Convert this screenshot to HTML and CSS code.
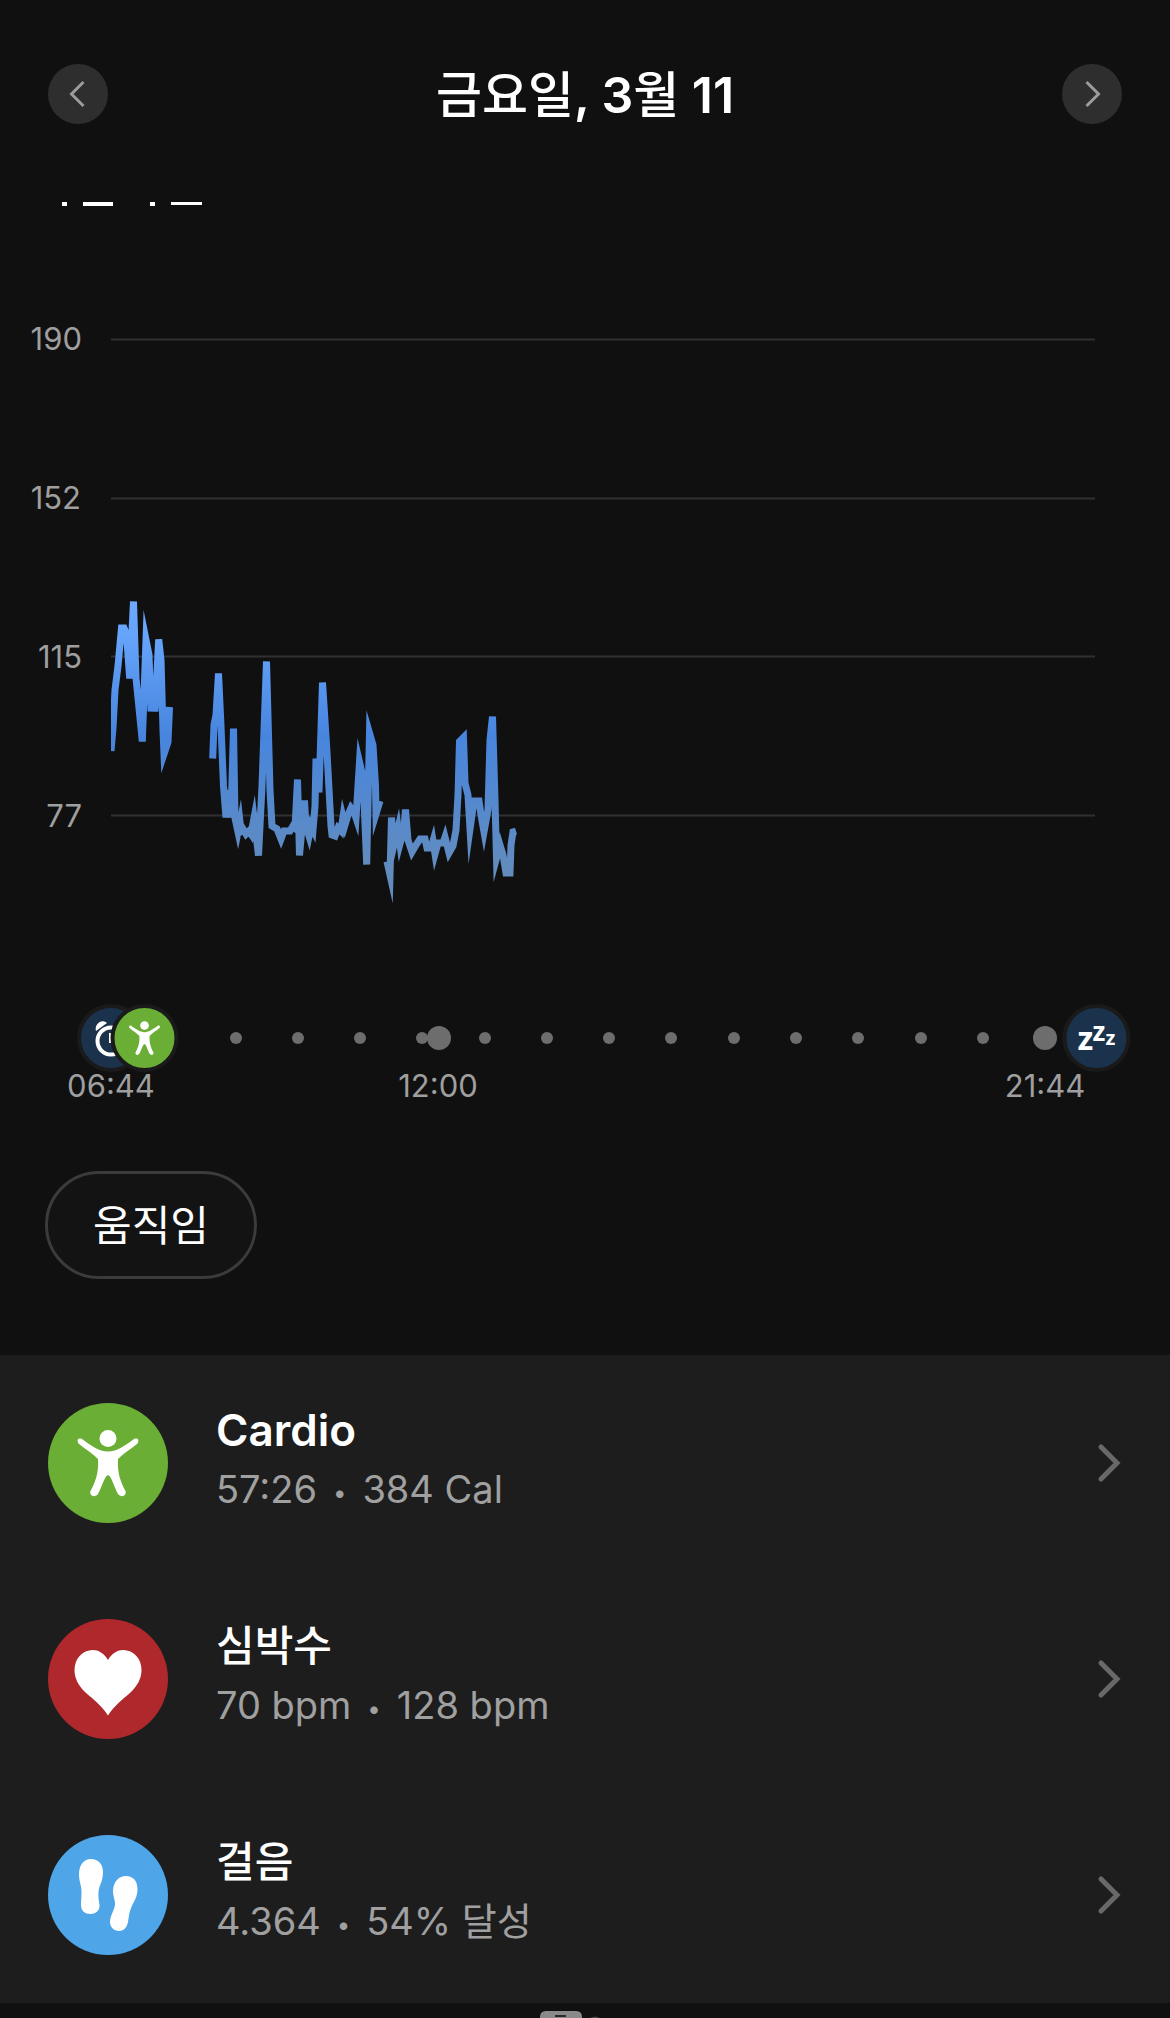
FILE: index.html
```
<!DOCTYPE html>
<html lang="ko">
<head>
    <meta charset="UTF-8">
    <meta name="viewport" content="width=device-width, initial-scale=1.0">
    <title>금요일, 3월 11</title>
    <link rel="stylesheet" href="styles.css">
</head>
<body>
    <header class="day-header">
        <button type="button" class="day-button" aria-label="이전 날">
            <svg width="60" height="60" viewBox="0 0 60 60"><path d="M35.500 18 L23.500 30 L35.500 42"/></svg>
        </button>
        <h1><span class="hangul">금요일</span>, 3<span class="hangul">월</span> 11</h1>
        <button type="button" class="day-button" aria-label="다음 날">
            <svg width="60" height="60" viewBox="0 0 60 60"><path d="M24.500 18 L36.500 30 L24.500 42"/></svg>
        </button>
    </header>

    <main>
        <!-- Lower edge of the heading scrolled under the header -->
        <svg class="scrolled-heading" width="180" height="4" viewBox="0 0 180 4" aria-hidden="true">
            <path d="M14 0h5v4h-5z M35 0h30v4h-30z M102 0h5v4h-5z M123 0h31v3h-31z"/>
        </svg>

        <section class="chart" aria-label="심박수">
            <svg viewBox="0 320 1170 600">
                <defs>
                    <linearGradient id="rate" gradientUnits="userSpaceOnUse" x1="0" y1="600" x2="0" y2="870">
                        <stop offset="0" stop-color="#6ca9ff"/>
                        <stop offset="0.150" stop-color="#65a2fa"/>
                        <stop offset="0.500" stop-color="#4785de"/>
                        <stop offset="1" stop-color="#628cbe"/>
                    </linearGradient>
                    <clipPath id="plot"><rect x="111" y="320" width="984" height="600"/></clipPath>
                </defs>
                <g class="grid">
                    <path d="M111 339.500H1095 M111 498.500H1095 M111 656.500H1095 M111 815.500H1095"/>
                </g>
                <g class="axis axis-y">
                    <text x="82" y="350">190</text>
                    <text x="81" y="509">152</text>
                    <text x="82" y="668">115</text>
                    <text x="82" y="827">77</text>
                </g>
                <g class="rate" clip-path="url(#plot)">
                    <polyline points="111,751 113,728 115,690 118,666 121.500,628 124,628 126.500,634 129.700,678.500 133.500,601.500 136,678 138,698 142.300,741.500 146,640 149,655 151,711.500 153,678 155,711.500 158.700,639.500 161,660 163,730 164,754 168,742 169.500,707"/>
                    <polyline points="212.700,758.500 214,725 216,715 218.500,673.500 221,726 223.500,786 226,817.500 227.500,790 231,817.500 233.500,728.500 235,818 238,832 240,822 241,831 243,829 246,834 249,831 251,834 254,818 258.500,855.500 262,786 266.500,661.500 270,790 272,826 277,829 281,839 284,831 290,831 293,826 295,828 297.500,779.500 299.500,855.500 304.500,800.500 306,826 309,836 311,826 313,830 315,806 316,758.500 319,792.500 322.500,682.500 327,752 331,826 332,835 335,836 338,828 341,831 343,817 345,825 348,815 351,808 354,812 356,818 359.500,762 363,777 366.700,864.500 369.500,733 373,745 375.500,786 376,814 380,801"/>
                    <polyline points="387,861.500 390,875 391.500,817.500 394,845 398,828 400,844 403.800,830 405.500,809.500 408,840 412,852 416,845 420,839 425,839 427,848 431,848 433,841 435,854 438,843 443,843 445,837 449,853 453,846 456,830 458,795 459.500,741.500 463.500,737.500 465,783 468,795 470,829 474,801 479,801 481,815 484,832 488,810 490,740 492.500,716.500 495,800 496.500,858 500,845 503,855 506,873 510,873 511,845 513,832 516,831"/>
                </g>
            </svg>
        </section>

        <section class="timeline" aria-label="하루">
            <svg viewBox="0 1000 1170 110">
                <defs>
                    <g id="person">
                        <circle cx="60" cy="35.500" r="8.500"/>
                        <path d="M34 36 C42 42 51 48.500 60 48.500 C69 48.500 78 42 86 36 C90 34.500 91.500 37 89.500 40.500 C83 46 76 50 70 56 C69 70 73 80 77.500 88 C79 93 73 95 70 91 C66 84 64 74 60 72 C56 74 54 84 50 91 C47 95 41 93 42.500 88 C47 80 51 70 50 56 C44 50 37 46 30.500 40.500 C28.500 37 30 34.500 34 36Z"/>
                    </g>
                </defs>
                <g class="ticks">
                    <circle cx="236" cy="1038" r="6"/>
                    <circle cx="298" cy="1038" r="6"/>
                    <circle cx="360" cy="1038" r="6"/>
                    <circle cx="422" cy="1038" r="6"/>
                    <circle cx="485" cy="1038" r="6"/>
                    <circle cx="547" cy="1038" r="6"/>
                    <circle cx="609" cy="1038" r="6"/>
                    <circle cx="671" cy="1038" r="6"/>
                    <circle cx="734" cy="1038" r="6"/>
                    <circle cx="796" cy="1038" r="6"/>
                    <circle cx="858" cy="1038" r="6"/>
                    <circle cx="921" cy="1038" r="6"/>
                    <circle cx="983" cy="1038" r="6"/>
                    <circle cx="439" cy="1038" r="12"/>
                    <circle cx="1045" cy="1038" r="12"/>
                </g>
                <!-- Wake up -->
                <g transform="translate(111 1038)">
                    <circle class="event wake" r="32"/>
                    <circle class="clock" cy="3" r="13.500"/>
                    <path class="clock-hand" d="M-1 -5 V4 H6"/>
                    <path class="glyph" d="M-15 -7 C-17 -14 -9 -20 -4 -15Z M15 -7 C17 -14 9 -20 4 -15Z"/>
                </g>
                <!-- Activity -->
                <g transform="translate(144.500 1038)">
                    <circle class="event activity" r="32"/>
                    <use class="glyph" href="#person" transform="scale(0.510) translate(-60 -60)"/>
                </g>
                <!-- Sleep -->
                <g transform="translate(1096.500 1038)">
                    <circle class="event sleep" r="32"/>
                    <g class="zzz">
                        <text x="-19" y="12" font-size="32">z</text>
                        <text x="-4" y="3" font-size="26">z</text>
                        <text x="9" y="7" font-size="20">z</text>
                    </g>
                </g>
                <g class="axis axis-x">
                    <text x="111" y="1097">06:44</text>
                    <text x="438" y="1097">12:00</text>
                    <text x="1045" y="1097">21:44</text>
                </g>
            </svg>
        </section>

        <div class="filters">
            <button type="button" class="filter">움직임</button>
        </div>

        <nav class="cards">
            <a href="#cardio" class="card">
                <svg class="badge green" width="120" height="120" viewBox="0 0 120 120"><use href="#person"/></svg>
                <span class="card-text">
                    <strong>Cardio</strong>
                    <span>57:26 <span class="dot">•</span> 384 Cal</span>
                </span>
                <svg class="chevron" width="26" height="40" viewBox="0 0 26 40"><path d="M5 4 L21 20 L5 36"/></svg>
            </a>
            <a href="#heart-rate" class="card">
                <svg class="badge red" width="120" height="120" viewBox="0 0 120 120">
                    <path d="M60 41 C56 34 50 31 45 31 C34 31 26.500 40 26.500 51 C26.500 60 31 67 37 73 C45 80 54 87 60 96.500 C66 87 75 80 83 73 C89 67 93.500 60 93.500 51 C93.500 40 86 31 75 31 C70 31 64 34 60 41Z"/>
                </svg>
                <span class="card-text">
                    <strong class="hangul">심박수</strong>
                    <span>70 bpm <span class="dot">•</span> 128 bpm</span>
                </span>
                <svg class="chevron" width="26" height="40" viewBox="0 0 26 40"><path d="M5 4 L21 20 L5 36"/></svg>
            </a>
            <a href="#steps" class="card">
                <svg class="badge blue" width="120" height="120" viewBox="0 0 120 120">
                    <path d="M43 24 C35 24 31 31 31 39 C31 47 33.500 50 33.500 57 C33.500 62 33 66 33 70 C33 76 37 79 42.500 79 C48 79 52 75 51.500 70 C51 66 50 62 50.500 57 C51 50 55 47 55 37 C55 29 50 24 43 24Z"/>
                    <path d="M78 41 C71 41 66 46 65 55 C65 63 67.500 65 67 70 C66 76 62 81 62 87 C62 92 66 96 71 96 C76 96 79 92 80 87 C81 81 81 78 83.500 72 C86 66 89.500 62 89.500 54 C89.500 46 85 41 78 41Z"/>
                </svg>
                <span class="card-text">
                    <strong class="hangul">걸음</strong>
                    <span>4.364 <span class="dot">•</span> 54% 달성</span>
                </span>
                <svg class="chevron" width="26" height="40" viewBox="0 0 26 40"><path d="M5 4 L21 20 L5 36"/></svg>
            </a>
        </nav>
    </main>

    <footer class="footer">
        <svg width="64" height="7" viewBox="0 0 64 7" aria-hidden="true">
            <path d="M0 7 V6 Q0 0 6 0 H36 Q42 0 42 6 V7Z"/>
            <path class="footer-mark" d="M15 4h11v2h-11z"/>
            <path class="footer-dot" d="M50 7 Q55 4 60 7Z"/>
        </svg>
    </footer>
</body>
</html>
```
FILE: styles.css
```
* {
    box-sizing: border-box;
}
body {
    margin: 0;
    min-height: 100vh;
    background-color: #101010;
    color: #fff;
    font-family: Inter, "Noto Sans CJK KR", sans-serif;
}
svg {
    display: block;
}
.day-header {
    display: flex;
    align-items: center;
    justify-content: space-between;
    height: 202px;
    padding: 0 48px 14px;
}
h1 {
    margin: 0;
    padding-top: 2px;
    font-size: 50px;
    font-weight: 600;
    line-height: 60px;
}
h1 .hangul {
    font-weight: 500;
}
.day-button {
    width: 60px;
    height: 60px;
    padding: 0;
    border: none;
    border-radius: 50%;
    background-color: #2e2e2e;
    cursor: pointer;
}
.day-button path {
    fill: none;
    stroke: #9c9c9c;
    stroke-width: 3;
}
.scrolled-heading {
    margin-left: 48px;
    fill: #fff;
}
.chart {
    padding-top: 114px;
}
.chart svg,
.timeline svg {
    width: 100%;
    height: auto;
}
.grid path {
    stroke: #303030;
    stroke-width: 2;
}
.axis {
    fill: #9f9f9f;
    font-size: 31px;
}
.axis-y {
    text-anchor: end;
}
.axis-x {
    text-anchor: middle;
}
.rate {
    fill: none;
    stroke: url(#rate);
    stroke-width: 7;
    stroke-miterlimit: 10;
}
.timeline {
    padding-top: 80px;
}
.ticks {
    fill: #6d6d6d;
}
.event {
    stroke: #1a1a1a;
    stroke-width: 4;
}
.wake,
.sleep {
    fill: #1b324c;
}
.activity {
    fill: #6aae36;
}
.clock,
.clock-hand {
    fill: none;
    stroke: #fff;
    stroke-width: 4;
}
.clock-hand {
    stroke-width: 2;
}
.glyph {
    fill: #fff;
}
.zzz {
    fill: #fff;
    font-family: "Noto Sans", sans-serif;
    font-weight: 700;
}
.filters {
    padding: 61px 45px 76px;
}
.filter {
    height: 108px;
    padding: 0 45px 6px;
    border: 3px solid #3b3b3b;
    border-radius: 54px;
    background-color: #131313;
    color: #fff;
    font-family: inherit;
    font-size: 42px;
    cursor: pointer;
}
.cards {
    background-color: #1d1d1d;
}
.card {
    display: flex;
    align-items: center;
    height: 216px;
    padding: 0 48px;
    color: #fff;
    text-decoration: none;
}
.badge {
    flex: none;
    border-radius: 50%;
    fill: #fff;
}
.green {
    background-color: #6aae36;
}
.red {
    background-color: #ae282c;
}
.blue {
    background-color: #4ea6e8;
}
.card-text {
    display: flex;
    flex: 1;
    flex-direction: column;
    gap: 5px;
    margin-left: 48px;
    padding-bottom: 7px;
    color: #a0a0a0;
    font-size: 38px;
    line-height: 54px;
}
.card-text strong {
    color: #fff;
    font-size: 44px;
    font-weight: 600;
}
.card-text .hangul {
    font-size: 42px;
    font-weight: 500;
}
.dot {
    display: inline-block;
    width: 24px;
    font-size: 24px;
    line-height: 24px;
    text-align: center;
    vertical-align: 2px;
}
.chevron path {
    fill: none;
    stroke: #696969;
    stroke-width: 5;
    stroke-linecap: round;
}
.footer {
    height: 15px;
    padding: 8px 0 0 540px;
    overflow: hidden;
    background-color: #101010;
    fill: #8a8a8a;
}
.footer-mark {
    fill: #2a2a2a;
}
.footer-dot {
    fill: #444;
}
```
